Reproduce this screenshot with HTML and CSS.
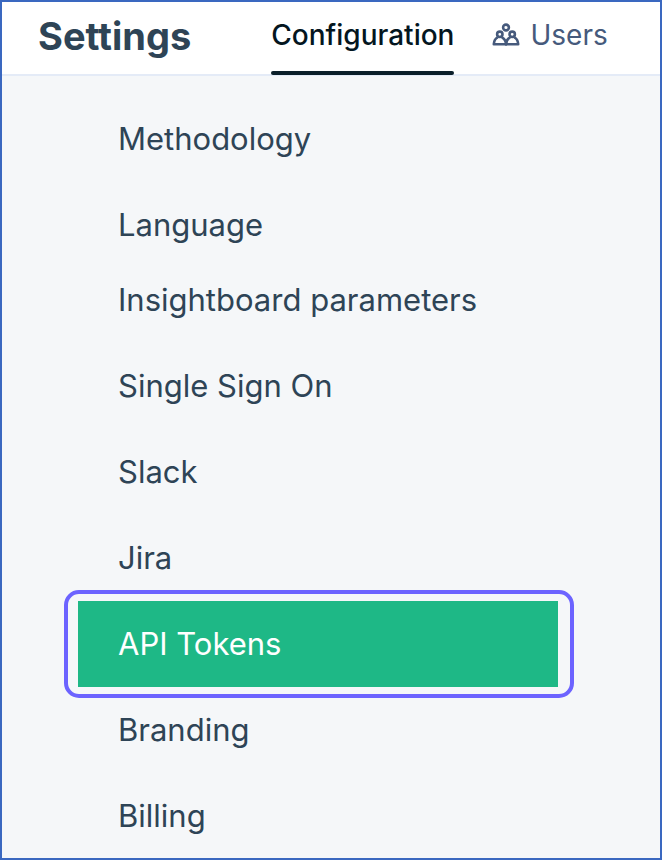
FILE: index.html
```html
<!DOCTYPE html>
<html lang="en">
<head>
  <meta charset="UTF-8" />
  <meta name="viewport" content="width=device-width, initial-scale=1.0"/>
  <title>Settings</title>
  <link rel="stylesheet" href="styles.css">
</head>
<body>

  <header class="header">
    <h1 class="title">Settings</h1>
    <nav class="tabs">
      <a class="tab active" href="#configuration">Configuration</a>
      <a class="tab" href="#users">
        <svg class="icon" viewBox="0 0 28 24" fill="none" stroke="currentColor" stroke-width="2.6" stroke-linejoin="round" aria-hidden="true">
          <circle cx="14" cy="4.5" r="2.9"/>
          <circle cx="7.8" cy="11.3" r="2.7"/>
          <circle cx="20.2" cy="11.3" r="2.7"/>
          <path d="M5.8 14.4C3.4 15.5 2 17.8 1.8 21.2H26.2C26 17.8 24.6 15.5 22.2 14.4"/>
          <path d="M9.8 14.4C12.4 15.6 13.8 18 14 21.4C14.2 18 15.6 15.6 18.2 14.4"/>
        </svg>
        Users
      </a>
    </nav>
  </header>

  <nav class="menu">
    <a class="item" href="#methodology">Methodology</a>
    <a class="item last" href="#language">Language</a>
    <a class="item" href="#insightboard">Insightboard parameters</a>
    <a class="item" href="#sso">Single Sign On</a>
    <a class="item" href="#slack">Slack</a>
    <a class="item" href="#jira">Jira</a>
    <a class="item selected" href="#api-tokens">API Tokens</a>
    <a class="item" href="#branding">Branding</a>
    <a class="item" href="#billing">Billing</a>
  </nav>

</body>
</html>
```

FILE: styles.css
```css
:root {
  --frame: #3a68c0;
  --bg: #f5f7f9;
  --white: #ffffff;
  --text: #2e4456;
  --dark: #0b1f2a;
  --muted: #465a7c;
  --line: #e4ebf7;
  --green: #1eb886;
  --ring: #6c63ff;
}

* {
  box-sizing: border-box;
}

body {
  margin: 0;
  min-height: 100vh;
  border: 2px solid var(--frame);
  background-color: var(--bg);
  color: var(--text);
  font-family: Inter, sans-serif;
}

a {
  color: inherit;
  text-decoration: none;
}

.header {
  display: flex;
  gap: 80px;
  height: 74px;
  padding-left: 36px;
  background-color: var(--white);
  border-bottom: 2px solid var(--line);
}

.title {
  margin: 0;
  font-size: 38px;
  font-weight: 700;
  line-height: 68px;
}

.tabs {
  display: flex;
  gap: 38px;
}

.tab {
  display: flex;
  align-items: center;
  gap: 10px;
  height: 73px;
  padding-bottom: 4px;
  border-bottom: 4px solid transparent;
  color: var(--muted);
  font-size: 28px;
}

.tab.active {
  position: relative;
  color: #04161f;
  font-weight: 500;
}

.tab.active::after {
  content: "";
  position: absolute;
  left: 0;
  right: 0;
  bottom: -4px;
  height: 4px;
  border-radius: 2px;
  background-color: var(--dark);
}

.icon {
  width: 28px;
  height: 24px;
}

.menu {
  display: flex;
  flex-direction: column;
  padding: 20px 102px 0 76px;
}

.item {
  padding: 23px 40px;
  font-size: 31px;
  line-height: 40px;
}

.item.last {
  padding-bottom: 12px;
}

.item:last-child {
  padding-bottom: 16px;
}

.item.selected {
  position: relative;
  background-color: var(--green);
  color: var(--white);
}

/* ring around the selected item */
.item.selected::after {
  content: "";
  position: absolute;
  inset: -11px -16px -11px -14px;
  border: 4px solid var(--ring);
  border-radius: 15px;
}
```
